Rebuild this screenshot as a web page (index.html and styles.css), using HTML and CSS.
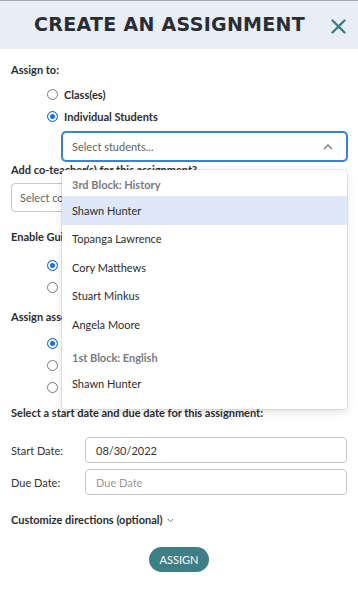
FILE: index.html
```html
<!DOCTYPE html>
<html lang="en">
<head>
    <meta charset="UTF-8">
    <meta name="viewport" content="width=device-width, initial-scale=1.0">
    <title>Create an Assignment</title>
    <link rel="stylesheet" href="styles.css">
</head>
<body>
    <div class="modal-head">
        <h1 class="modal-title">CREATE AN ASSIGNMENT</h1>
        <button class="close-btn" aria-label="Close">
            <svg width="15" height="15" viewBox="0 0 15 15"><path d="M1.5 1.5 L13.5 13.5 M13.5 1.5 L1.5 13.5" stroke="#3d7c85" stroke-width="2.4" stroke-linecap="round"/></svg>
        </button>
    </div>

    <form class="modal-body">
        <div class="field-label first">Assign to:</div>
        <div class="radio-group">
            <label class="radio-row"><input type="radio" name="assign"> Class(es)</label>
            <label class="radio-row"><input type="radio" name="assign" checked> Individual Students</label>
        </div>

        <!-- student picker, menu open -->
        <div class="picker">
            <div class="picker-box focused">
                <span class="placeholder">Select students...</span>
                <svg class="chev" width="10" height="6" viewBox="0 0 10 6"><path d="M1 5 L5 1 L9 5" fill="none" stroke="#777" stroke-width="1.3"/></svg>
            </div>
            <div class="picker-menu">
                <div class="group-title">3rd Block: History</div>
                <div class="option active">Shawn Hunter</div>
                <div class="option">Topanga Lawrence</div>
                <div class="option">Cory Matthews</div>
                <div class="option">Stuart Minkus</div>
                <div class="option">Angela Moore</div>
                <div class="group-title second">1st Block: English</div>
                <div class="option">Shawn Hunter</div>
            </div>
        </div>

        <div class="field-label tight">Add co-teacher(s) for this assignment?</div>
        <div class="picker-box wide">
            <span class="placeholder">Select co-teachers...</span>
        </div>

        <!-- option labels sit under the open menu -->
        <div class="field-label guided">Enable Guided Reading?</div>
        <div class="radio-group guided-radios">
            <label class="radio-row"><input type="radio" name="guided" aria-label="Yes" checked></label>
            <label class="radio-row"><input type="radio" name="guided" aria-label="No"></label>
        </div>

        <div class="field-label assess">Assign assessment as:</div>
        <div class="radio-group assess-radios">
            <label class="radio-row"><input type="radio" name="assess" aria-label="Quiz" checked></label>
            <label class="radio-row"><input type="radio" name="assess" aria-label="Practice"></label>
            <label class="radio-row"><input type="radio" name="assess" aria-label="None"></label>
        </div>

        <div class="field-label dates">Select a start date and due date for this assignment:</div>
        <div class="date-row first-date">
            <span class="date-label">Start Date:</span>
            <input class="date-input" type="text" value="08/30/2022">
        </div>
        <div class="date-row">
            <span class="date-label">Due Date:</span>
            <input class="date-input" type="text" placeholder="Due Date">
        </div>

        <div class="field-label custom">
            Customize directions (optional)
            <svg width="7" height="5" viewBox="0 0 7 5"><path d="M0.8 1 L3.5 3.8 L6.2 1" fill="none" stroke="#666" stroke-width="0.9"/></svg>
        </div>

        <div class="actions">
            <button type="button" class="assign-btn">ASSIGN</button>
        </div>
    </form>
</body>
</html>
```

FILE: styles.css
```css
body { margin: 0; font-family: Lato, "Noto Sans", sans-serif; font-size: 11px; color: #2c2c2c; background: #fff; }

.modal-head { height: 48px; border-top: 1px solid #a3a7ae; background: #e9edf6; display: flex; align-items: center; padding: 0 12px 0 8px; }
.modal-title { flex: 1; margin: 0 0 2px; text-align: center; font-family: "DejaVu Sans", sans-serif; font-weight: bold; font-size: 19px; letter-spacing: 0.3px; color: #2a2d33; }
.close-btn { border: none; background: none; padding: 0; width: 15px; height: 15px; display: flex; cursor: pointer; margin-top: 2px; }

.modal-body { padding: 0 11px; }
.field-label { font-weight: bold; line-height: 14px; }
.field-label.first { margin-top: 14px; }
.field-label.tight { margin-top: 2px; }
.field-label.guided { margin-top: 18px; }
.field-label.assess { margin-top: 12px; }
.field-label.dates { margin-top: 8px; }
.field-label.custom { margin-top: 18px; display: flex; align-items: center; gap: 4px; }

.radio-group { padding-left: 36px; margin-top: 6px; }
.guided-radios { margin-top: 10px; }
.assess-radios { margin-top: 8px; }
.radio-row { height: 22px; display: flex; align-items: center; gap: 6px; font-weight: bold; }
.radio-row input { appearance: none; margin: 0; width: 11px; height: 11px; border: 1px solid #7a7a7a; border-radius: 50%; background: #fff; }
.radio-row input:checked { border-color: #1a6fe0; background: #1a6fe0; box-shadow: inset 0 0 0 2px #fff; }

.picker { position: relative; margin: 5px 0 0 51px; }
.picker-box { height: 29px; box-sizing: border-box; border: 1px solid #c9c9c9; border-radius: 4px; display: flex; align-items: center; justify-content: space-between; padding: 0 13px 0 9px; background: #fff; }
.picker-box.focused { border-color: #3d7fd3; box-shadow: 0 0 0 1px #3d7fd3; }
.picker-box.wide { margin-top: 6px; padding-left: 8px; }
.placeholder { color: #5f5f5f; }
.chev { margin-top: 1px; }

.picker-menu { position: absolute; top: 38px; left: 0; right: 0; height: 239px; box-sizing: border-box; padding-top: 2px; background: #fff; border-radius: 4px; box-shadow: 0 0 0 1px rgba(0,0,0,0.08), 0 3px 8px rgba(0,0,0,0.12); overflow: hidden; z-index: 10; }
.group-title { height: 24px; display: flex; align-items: center; padding: 0 10px; font-weight: bold; color: #7a7a7a; }
.group-title.second { margin-top: 7px; }
.option { height: 28.5px; display: flex; align-items: center; padding: 0 10px; color: #2c2c2c; }
.option.active { background: #dee8f8; }

.date-row { display: flex; align-items: center; margin-top: 6px; }
.date-row.first-date { margin-top: 17px; }
.date-label { width: 74px; color: #333; }
.date-input { flex: 1; height: 26px; box-sizing: border-box; border: 1px solid #c9c9c9; border-radius: 4px; padding: 0 10px; font-family: inherit; font-size: 11px; color: #333; }
.date-input::placeholder { color: #9a9a9a; }

.actions { display: flex; justify-content: center; margin-top: 20px; }
.assign-btn { width: 60px; height: 25px; border: none; border-radius: 13px; background: #3e7e86; color: #fff; font-family: inherit; font-size: 11px; padding: 0; cursor: pointer; }
```
